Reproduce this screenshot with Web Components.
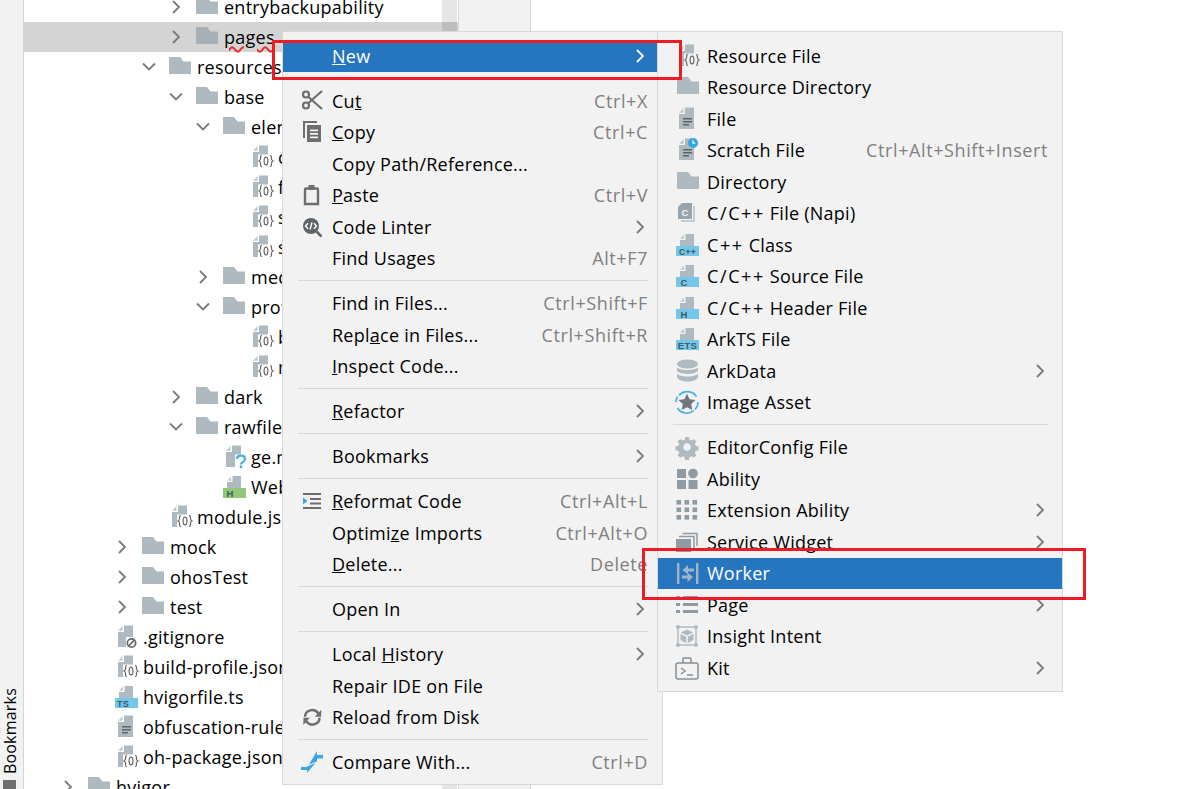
<!DOCTYPE html>
<html><head><meta charset="utf-8">
<style>
html,body{margin:0;padding:0;width:1183px;height:789px;overflow:hidden;background:#fff;font:18px "Open Sans","Noto Sans",sans-serif;color:#000;letter-spacing:.25px}
.w{letter-spacing:1.6px}
</style></head><body>
<ide-shell>
  <project-tree>
    <tree-row level="3" chev="right" icon="folder">entrybackupability</tree-row>
    <tree-row level="3" chev="right" icon="folder" selected><span style="text-decoration:underline wavy #e8262c 1.5px;text-underline-offset:2px">pages</span></tree-row>
    <tree-row level="2" chev="down" icon="folder">resources</tree-row>
    <tree-row level="3" chev="down" icon="folder">base</tree-row>
    <tree-row level="4" chev="down" icon="folder">element</tree-row>
    <tree-row level="5" icon="json">color.json</tree-row>
    <tree-row level="5" icon="json">float.json</tree-row>
    <tree-row level="5" icon="json">string.json</tree-row>
    <tree-row level="5" icon="json">style.json</tree-row>
    <tree-row level="4" chev="right" icon="folder">media</tree-row>
    <tree-row level="4" chev="down" icon="folder">profile</tree-row>
    <tree-row level="5" icon="json">backup_config.json</tree-row>
    <tree-row level="5" icon="json">main_pages.json</tree-row>
    <tree-row level="3" chev="right" icon="folder">dark</tree-row>
    <tree-row level="3" chev="down" icon="folder">rawfile</tree-row>
    <tree-row level="4" icon="unknown">ge.min.js</tree-row>
    <tree-row level="4" icon="html">Web.html</tree-row>
    <tree-row level="2" icon="json">module.json5</tree-row>
    <tree-row level="1" chev="right" icon="folder">mock</tree-row>
    <tree-row level="1" chev="right" icon="folder">ohosTest</tree-row>
    <tree-row level="1" chev="right" icon="folder">test</tree-row>
    <tree-row level="0" icon="ignore">.gitignore</tree-row>
    <tree-row level="0" icon="json">build-profile.json5</tree-row>
    <tree-row level="0" icon="ts">hvigorfile.ts</tree-row>
    <tree-row level="0" icon="text">obfuscation-rules.txt</tree-row>
    <tree-row level="0" icon="json">oh-package.json5</tree-row>
    <tree-row level="-1" chev="right" icon="folder">hvigor</tree-row>
  </project-tree>
</ide-shell>

<context-menu style="left:282px;top:31px;width:381px;height:754px;z-index:1">
  <menu-item selected arrow><u>N</u>ew</menu-item>
  <menu-sep></menu-sep>
  <menu-item icon="cut" key="Ctrl+X">Cu<u>t</u></menu-item>
  <menu-item icon="copy" key="Ctrl+C"><u>C</u>opy</menu-item>
  <menu-item>Copy Path/Reference...</menu-item>
  <menu-item icon="paste" key="Ctrl+V"><u>P</u>aste</menu-item>
  <menu-item icon="linter" arrow>Code Linter</menu-item>
  <menu-item key="Alt+F7">Find Usages</menu-item>
  <menu-sep></menu-sep>
  <menu-item key="Ctrl+Shift+F">Find in Files...</menu-item>
  <menu-item key="Ctrl+Shift+R">Repl<u>a</u>ce in Files...</menu-item>
  <menu-item><u>I</u>nspect Code...</menu-item>
  <menu-sep></menu-sep>
  <menu-item arrow><u>R</u>efactor</menu-item>
  <menu-sep></menu-sep>
  <menu-item arrow>Bookmarks</menu-item>
  <menu-sep></menu-sep>
  <menu-item icon="reformat" key="Ctrl+Alt+L"><u>R</u>eformat Code</menu-item>
  <menu-item key="Ctrl+Alt+O">Optimi<u>z</u>e Imports</menu-item>
  <menu-item key="Delete"><u>D</u>elete...</menu-item>
  <menu-sep></menu-sep>
  <menu-item arrow>Open In</menu-item>
  <menu-sep></menu-sep>
  <menu-item arrow>Local <u>H</u>istory</menu-item>
  <menu-item>Repair IDE on File</menu-item>
  <menu-item icon="reload">Reload from Disk</menu-item>
  <menu-sep></menu-sep>
  <menu-item icon="compare" key="Ctrl+D">Compare With...</menu-item>
</context-menu>

<context-menu style="left:657px;top:31px;width:406px;height:661px;z-index:2">
  <menu-item icon="json">Resource File</menu-item>
  <menu-item icon="folder">Resource Directory</menu-item>
  <menu-item icon="text">File</menu-item>
  <menu-item icon="scratch" key="Ctrl+Alt+Shift+Insert">Scratch File</menu-item>
  <menu-item icon="folder">Directory</menu-item>
  <menu-item icon="cfile"><span class="w">C/C++</span> File (Napi)</menu-item>
  <menu-item icon="cpp"><span class="w">C++</span> Class</menu-item>
  <menu-item icon="c"><span class="w">C/C++</span> Source File</menu-item>
  <menu-item icon="h"><span class="w">C/C++</span> Header File</menu-item>
  <menu-item icon="ets">ArkTS File</menu-item>
  <menu-item icon="db" arrow>ArkData</menu-item>
  <menu-item icon="asset">Image Asset</menu-item>
  <menu-sep></menu-sep>
  <menu-item icon="gear">EditorConfig File</menu-item>
  <menu-item icon="ability">Ability</menu-item>
  <menu-item icon="grid" arrow>Extension Ability</menu-item>
  <menu-item icon="widget" arrow>Service Widget</menu-item>
  <menu-item icon="worker" selected>Worker</menu-item>
  <menu-item icon="list" arrow>Page</menu-item>
  <menu-item icon="cube">Insight Intent</menu-item>
  <menu-item icon="kit" arrow>Kit</menu-item>
</context-menu>

<red-box style="left:272px;top:40px;width:410px;height:40px"></red-box>
<red-box style="left:642px;top:548px;width:444px;height:52px"></red-box>

<script>
const G='#afb9c0',D='#6e6e6e',B='#74c7e8';
const page=()=>`<path fill="${G}" d="M7 .5h9v21.500H1V7h6z"/><path fill="${G}" opacity=".8" d="M5.500 1v4.800H1.200z"/>`;
const braces=`<rect x="6" y="9.500" width="16" height="14.500" fill="var(--ib,#f2f2f2)"/><g fill="none" stroke="#666" stroke-width="1.200"><path d="M10 10.500c-1.500 0-1.400 1-1.400 2.600 0 1.800-.3 2.500-1.500 2.900 1.200.4 1.500 1.100 1.500 2.900 0 1.600-.1 2.600 1.400 2.600"/><path d="M18 10.500c1.500 0 1.400 1 1.400 2.600 0 1.800.3 2.500 1.500 2.900-1.200.4-1.500 1.100-1.500 2.900 0 1.600.1 2.600-1.400 2.600"/><ellipse cx="14" cy="16" rx="1.900" ry="3.900"/></g>`;
const lines=(x=5,y=11,c='#5f6468',w=9)=>`<g fill="${c}"><rect x="${x}" y="${y}" width="${w}" height="1.500"/><rect x="${x}" y="${y+3}" width="${w}" height="1.500"/><rect x="${x}" y="${y+6}" width="${w-3}" height="1.500"/></g>`;
const badge=(label,fs=9,c=B,x=null)=>`<path fill="${G}" d="M9.500 1H18v12H4V7h5.500z"/><path fill="${G}" opacity=".8" d="M8 1.500v4.300H4.200z"/><rect x="0" y="13" width="23" height="10" fill="${c}"/><text x="${x===null?11.500:x}" y="21.800" text-anchor="middle" font-family="Liberation Sans,sans-serif" font-weight="700" letter-spacing="0.300" font-size="${fs}" fill="#3d5a68">${label}</text>`;
const ICONS={
 folder:()=>`<path style="fill:var(--f,${G})" d="M1 2h11l3.500 4.500H23V19H1z"/>`,
 json:()=>page()+braces,
 unknown:()=>page()+`<rect x="10" y="9.500" width="14" height="14.500" fill="var(--ib,#fff)"/><path fill="none" stroke="#3fb1e3" stroke-width="2.200" d="M12 14c0-4.500 8-4.500 8 0 0 3-4 2.800-4 5.500"/><rect x="14.800" y="20.500" width="2.400" height="2.500" fill="#3fb1e3"/>`,
 html:()=>badge('H',9.500,'#93c878',7),
 ts:()=>badge('TS',9,B,8),
 c:()=>badge('C',9.500,B,8),h:()=>badge('H',9.500,B,8),cpp:()=>badge('C++',8.500),ets:()=>badge('ETS',9.500),
 ignore:()=>page()+`<rect x="9" y="12" width="14" height="12" fill="var(--ib,#fff)"/><circle cx="14.500" cy="18" r="4.200" fill="none" stroke="#666" stroke-width="1.700"/><path d="m11.500 21 6-6" stroke="#666" stroke-width="1.700"/>`,
 text:()=>page()+lines(),
 scratch:()=>page()+lines()+`<circle cx="15" cy="5" r="5" fill="#35a7e0"/><path d="M15 2.200v3h2.200" fill="none" stroke="#fff" stroke-width="1.200"/>`,
 cfile:()=>`<path fill="#9aa4ab" d="M3 6 7 2h10v16H3z"/><path fill="none" stroke="#b5bdc3" stroke-width="1.500" d="M19 5v15H6"/><text x="10" y="14.500" text-anchor="middle" font-family="Liberation Sans,sans-serif" font-weight="700" font-size="9.500" fill="#f2f2f2">C</text>`,
 cut:()=>`<g fill="none" stroke="${D}" stroke-width="2.200"><circle cx="6" cy="5.500" r="3"/><circle cx="6" cy="16.500" r="3"/><path d="M8.200 7.800 22 20M8.200 14.200 22 2"/></g>`,
 copy:()=>`<path fill="${D}" d="M3 1h14v2H5v15H3z"/><path fill="${D}" fill-rule="evenodd" d="M7 5h14v17H7zM10 9.500v1.700h8V9.500zM10 13v1.700h8V13zM10 16.500v1.700h8v-1.700z"/>`,
 paste:()=>`<path fill="none" stroke="${D}" stroke-width="2.400" d="M6 5.500h11a1 1 0 0 1 1 1V21H5V6.500a1 1 0 0 1 1-1z"/><rect x="8.500" y="2" width="6" height="5" fill="${D}"/>`,
 linter:()=>`<circle cx="11" cy="11" r="8" fill="#5f6468"/><path d="m16.500 16.500 5 5" stroke="#5f6468" stroke-width="2.500"/><path fill="none" stroke="#fff" stroke-width="1.400" d="M8 8.200 5.500 11 8 13.800M14 8.200l2.500 2.800-2.500 2.800M12 7.500 10 14.500"/>`,
 reformat:()=>`<g transform="translate(2 1)"><g fill="${D}"><rect x="1" y="3" width="18" height="2"/><rect x="8" y="8" width="11" height="2"/><rect x="8" y="12.500" width="11" height="2"/><rect x="1" y="17" width="18" height="2"/></g><path fill="#3fa5de" d="M1 7.500 5.500 11 1 14.500z"/></g>`,
 reload:()=>`<g transform="translate(1.500 1.500) scale(.9)"><g fill="none" stroke="${D}" stroke-width="2.800"><path d="M4 11.500C4 4 14 1 19 8"/><path d="M20 12.500C20 20 10 23 5 16"/></g><path fill="${D}" d="m22 3.500-.2 8h-7zM2 20.500l.2-8h7z"/></g>`,
 compare:()=>`<g fill="#3fa5de"><path d="M17 1v4h6v3.500h-6v3L9 14.500z"/><path d="M15.500 13 7 23v-3H1v-3h6v-.5z"/></g>`,
 db:()=>`<g fill="${G}"><ellipse cx="12.500" cy="5" rx="10.500" ry="4.500"/><path d="M2 8c1.500 4 19.500 4 21 0v3.500c-1.500 4.500-19.500 4.500-21 0z"/><path d="M2 14.500c1.500 4 19.500 4 21 0V18c-1.500 6-19.500 6-21 0z"/></g>`,
 asset:()=>`<path fill="none" stroke="#3fb1e3" stroke-width="1.600" d="M4 5.500A11 11 0 0 1 21.500 6.500M23 12a11 11 0 0 1-3 7.500M19 20.500A11 11 0 0 1 2.500 18M1 12a11 11 0 0 1 1.500-5.500"/><path fill="#70767c" d="m12 3.800 2.600 5.400 5.900.8-4.300 4.100 1 5.900-5.200-2.800L6.800 20l1-5.900L3.500 10l5.900-.8z"/>`,
 gear:()=>`<path fill="${G}" fill-rule="evenodd" d="M10 1h4l.6 3 2.300 1 2.500-1.700 2.800 2.800-1.700 2.500 1 2.300 3 .6v4l-3 .6-1 2.300 1.700 2.500-2.800 2.800-2.500-1.700-2.300 1-.6 3h-4l-.6-3-2.300-1-2.500 1.700-2.800-2.800 1.700-2.500-1-2.300-3-.6v-4l3-.6 1-2.300L1.800 6.100l2.800-2.800 2.500 1.700 2.300-1zm2 7a4 4 0 1 0 0 8 4 4 0 0 0 0-8z" transform="translate(1 1) scale(.92)"/>`,
 ability:()=>`<g fill="#8f9aa2"><rect x="2" y="2" width="9" height="9"/><circle cx="18" cy="6.500" r="4.800"/><rect x="2" y="13" width="9" height="9"/><rect x="13.500" y="13" width="9" height="9"/></g>`,
 grid:()=>{let s='';for(const y of [2,9.5,17])for(const x of [1.5,9.5,17.5])s+=`<rect x="${x}" y="${y}" width="4.600" height="4.600" fill="#8f9aa2"/>`;return s},
 widget:()=>`<path fill="#8f9aa2" d="M1 9h15v13H1z"/><path fill="none" stroke="#8f9aa2" stroke-width="1.500" d="M4 6.500h15V19M7.500 3.500H22V16"/>`,
 worker:()=>`<g fill="#a3b4c6"><rect x="2" y="2" width="2.400" height="21"/><rect x="21" y="2" width="2.400" height="21"/><path d="M13 4 7.500 9l5.500 4.500v-3h6v-3h-6zM12.500 11.500v3H7v3h5.500V21L18 16z"/></g>`,
 list:()=>`<g fill="#8f9aa2"><rect x="1" y="3" width="4" height="3"/><rect x="8" y="3" width="15" height="3"/><rect x="1" y="10" width="4" height="3"/><rect x="8" y="10" width="15" height="3"/><rect x="1" y="17" width="4" height="3"/><rect x="8" y="17" width="15" height="3"/></g>`,
 cube:()=>`<g fill="none" stroke="${G}" stroke-width="1.400"><rect x="3" y="3" width="18" height="18"/></g><g fill="${G}"><circle cx="3" cy="3" r="2"/><circle cx="21" cy="3" r="2"/><circle cx="3" cy="21" r="2"/><circle cx="21" cy="21" r="2"/><path d="m12 5.500 6 3-6 3-6-3zM5.500 10l5.700 2.800V19l-5.700-3zM18.500 10v6l-5.700 3v-6.200z"/></g>`,
 kit:()=>`<path fill="none" stroke="#868e94" stroke-width="1.500" d="M3 7h18a2 2 0 0 1 2 2v12a2 2 0 0 1-2 2H3a2 2 0 0 1-2-2V9a2 2 0 0 1 2-2zM8 7V3a1 1 0 0 1 1-1h6a1 1 0 0 1 1 1v4M6 12l4 3-4 3M12 19h6"/>`
};
const svg=(n,dx=0)=>`<svg viewBox="0 0 24 24" width="24" height="24" style="display:block;overflow:visible;transform:translateX(${dx}px)">${(ICONS[n]||(()=>''))()}</svg>`;
const chev=(d,c='#7a7a7a')=>`<svg viewBox="0 0 10 14" width="10" height="14" style="display:block;overflow:visible"><path fill="none" stroke="${c}" stroke-width="1.800" d="${d==='down'?'M-1 3.500 5 9.500 11 3.500':'M2 1l6 6-6 6'}"/></svg>`;
const TREE_DX={folder:-2,html:-1,ts:-1};
const MENU_DX={folder:1,json:3,text:3,scratch:3,cpp:1,c:1,h:1,ets:1};

class Base extends HTMLElement{
  html(s){this.attachShadow({mode:'open'}).innerHTML=s}
}
customElements.define('ide-shell',class extends Base{connectedCallback(){ if(this.shadowRoot)return; this.html(`<style>
 :host{display:flex;width:1183px;height:789px;overflow:hidden;background:#fff}
 .strip{width:23px;flex:none;background:#f2f2f2;border-right:1px solid #d4d4d4;display:flex;flex-direction:column;justify-content:flex-end;align-items:center}
 .label{writing-mode:vertical-rl;transform:rotate(180deg);font-size:16px;line-height:16px;letter-spacing:.2px;margin-bottom:6px;margin-left:-4px}
 .mark{width:13px;height:9px;background:#6e6e6e;margin-left:-4px;flex:none}
 .tree{width:434px;flex:none;overflow:hidden;border-right:1px solid #d8d8d8;position:relative}
 .bar{position:absolute;right:1px;top:0;bottom:0;width:15px;background:rgba(0,0,0,.1)}
 .gutter{width:71px;flex:none;border-right:1px solid #d8d8d8;background:#f2f2f2}
 </style><div class="strip"><span class="label">Bookmarks</span><div class="mark"></div></div><div class="tree"><slot></slot><div class="bar"></div></div><div class="gutter"></div>`)}});
customElements.define('project-tree',class extends Base{connectedCallback(){ if(this.shadowRoot)return; this.html(`<style>:host{display:flex;flex-direction:column;margin-top:-8px}</style><slot></slot>`)}});
customElements.define('tree-row',class extends Base{connectedCallback(){ if(this.shadowRoot)return;
  const lvl=+this.getAttribute('level'), c=this.getAttribute('chev'), ic=this.getAttribute('icon');
  const sel=this.hasAttribute('selected');
  const pad=92+lvl*27;
  const dx=ic in TREE_DX?TREE_DX[ic]:1;
  this.html(`<style>
  :host{display:block;height:30px;flex:none}
  .r{display:flex;align-items:center;height:30px;padding-left:${pad}px;white-space:nowrap;background:${sel?'#d4d4d4':'transparent'}}
  .c{width:14px;flex:none;display:flex;justify-content:center;margin-left:-28px;margin-right:14px}
  .i{width:24px;height:24px;flex:none;--ib:${sel?'#d4d4d4':'#fff'};--f:${sel?'#a7b0b7':G};margin-right:3px}
  </style><div class="r"><span class="c">${c?chev(c):''}</span><span class="i">${svg(ic,dx)}</span><slot></slot></div>`)}});
customElements.define('context-menu',class extends Base{connectedCallback(){ if(this.shadowRoot)return; this.html(`<style>
  :host{display:flex;flex-direction:column;position:absolute;box-sizing:border-box;background:#f2f2f2;border:1px solid #d9d9d9;padding:8px 0 0 0}
  </style><slot></slot>`)}});
customElements.define('menu-sep',class extends Base{connectedCallback(){ if(this.shadowRoot)return; this.html(`<style>
  :host{display:flex;align-items:center;height:13.5px;padding:0 14px 0 15px;box-sizing:border-box;flex:none}
  i{display:block;flex:1;height:1px;background:#d9d9d9}
  </style><i></i>`)}});
customElements.define('menu-item',class extends Base{connectedCallback(){ if(this.shadowRoot)return;
  const sel=this.hasAttribute('selected'),k=this.getAttribute('key'),ic=this.getAttribute('icon'),
        arrow=this.hasAttribute('arrow');
  this.html(`<style>
  :host{display:block;height:31.5px;flex:none}
  .r{display:flex;align-items:center;height:100%;background:${sel?'#2675bf':'transparent'};color:${sel?'#fff':'#000'};white-space:nowrap;padding:0 14px 0 17px}
  .i{width:24px;height:24px;flex:none;margin-right:8px;--ib:#f2f2f2}
  .t{flex:1}
  .k{color:#808080;margin-left:16px;letter-spacing:.6px}
  .a{flex:none;margin-right:3px}
  </style><div class="r"><span class="i">${ic?svg(ic,MENU_DX[ic]||0):''}</span><span class="t"><slot></slot></span>${k?`<span class="k">${k}</span>`:''}${arrow?`<span class="a">${chev('right',sel?'#fff':'#7a7a7a')}</span>`:''}</div>`)}});
customElements.define('red-box',class extends Base{connectedCallback(){ if(this.shadowRoot)return; this.html(`<style>
  :host{display:block;position:absolute;box-sizing:border-box;border:3.5px solid #ed1c24;z-index:5;pointer-events:none}
  </style>`)}});
</script>
</body></html>
